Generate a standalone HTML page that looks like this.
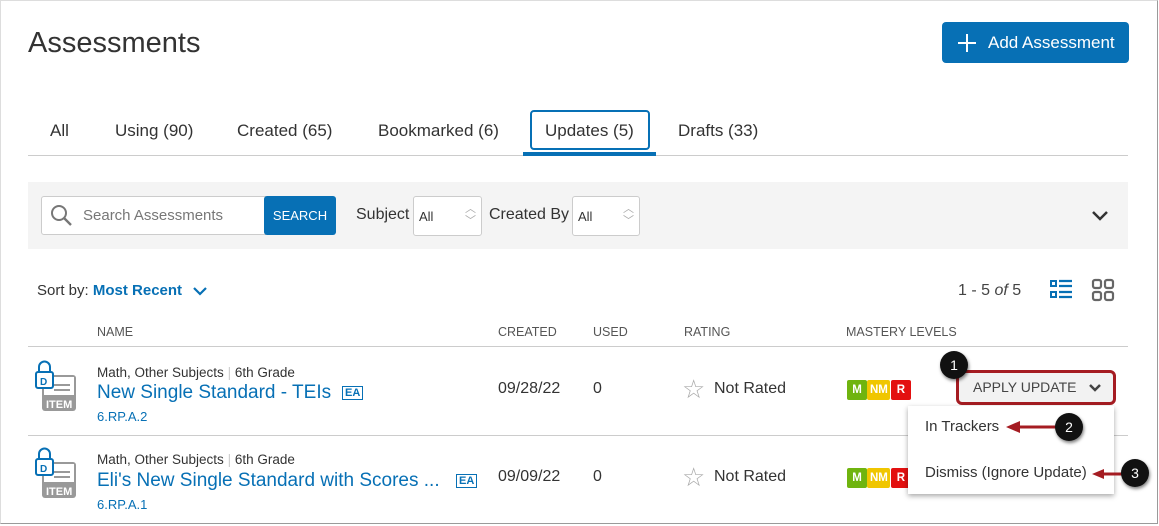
<!DOCTYPE html>
<html><head><meta charset="utf-8"><style>
*{box-sizing:border-box;margin:0;padding:0}
body{width:1159px;height:526px;background:#fff;font-family:"Liberation Sans",sans-serif;color:#333;position:relative;overflow:hidden}
.a{position:absolute;white-space:nowrap}
.frame{position:absolute;left:0;top:0;width:1158px;height:524px;border:1px solid #9a9a9a;border-top-color:#ddd;border-left-color:#ddd}
.tab{font-size:17px;color:#333;top:121px}
.hdr{font-size:12.5px;color:#555;top:325px}
.badge{display:inline-block;width:20px;height:20px;border-radius:2px;color:#fff;font-size:11.5px;text-align:center;line-height:20px;font-weight:bold}
.circ{width:28px;height:28px;border-radius:50%;background:#111;color:#fff;font-size:14px;text-align:center;line-height:28px;box-shadow:1px 2px 3px rgba(0,0,0,.5)}
.sel{border:1px solid #ccc;border-radius:3px;background:#fff;height:40px;top:196px;font-size:13px;padding:12px 5px}
</style></head><body>
<div class="frame"></div>
<div class="a" style="left:28px;top:27px;font-size:29px;color:#333">Assessments</div>
<div class="a" style="left:942px;top:22px;width:187px;height:41px;background:#0770b5;border-radius:4px;color:#fff;font-size:17px;line-height:41px;padding-left:46px">Add Assessment</div>
<div class="a" style="left:958px;top:42px;width:18px;height:2px;background:#fff"></div>
<div class="a" style="left:966px;top:34px;width:2px;height:18px;background:#fff"></div>

<div class="a tab" style="left:50px">All</div>
<div class="a tab" style="left:115px">Using (90)</div>
<div class="a tab" style="left:237px">Created (65)</div>
<div class="a tab" style="left:378px">Bookmarked (6)</div>
<div class="a" style="left:530px;top:110px;width:120px;height:40px;border:2px solid #0770b5;border-radius:4px"></div>
<div class="a tab" style="left:545px">Updates (5)</div>
<div class="a tab" style="left:678px">Drafts (33)</div>
<div class="a" style="left:28px;top:155px;width:1100px;height:1px;background:#ccc"></div>
<div class="a" style="left:523px;top:152px;width:133px;height:4px;background:#0770b5"></div>

<div class="a" style="left:28px;top:182px;width:1100px;height:67px;background:#f4f4f4"></div>
<div class="a" style="left:41px;top:196px;width:225px;height:39px;background:#fff;border:1px solid #ccc;border-radius:3px 0 0 3px"></div>
<svg class="a" style="left:50px;top:204px" width="24" height="24" viewBox="0 0 24 24"><circle cx="9" cy="9" r="7" fill="none" stroke="#777" stroke-width="2"/><path d="M14 14l7 7" stroke="#777" stroke-width="2.4"/></svg>
<div class="a" style="left:83px;top:207px;font-size:15px;color:#777">Search Assessments</div>
<div class="a" style="left:264px;top:196px;width:72px;height:39px;background:#0770b5;border-radius:3px;color:#fff;font-size:13px;line-height:39px;text-align:center">SEARCH</div>
<div class="a" style="left:356px;top:206px;font-size:16px">Subject</div>
<div class="a sel" style="left:413px;width:69px">All<span style="position:absolute;right:5px;top:6px;color:#aaa;font-size:11px;line-height:12px">︿<br>﹀</span></div>
<div class="a" style="left:489px;top:206px;font-size:16px">Created By</div>
<div class="a sel" style="left:572px;width:68px">All<span style="position:absolute;right:5px;top:6px;color:#aaa;font-size:11px;line-height:12px">︿<br>﹀</span></div>
<svg class="a" style="left:1091px;top:210px" width="18" height="12"><path d="M2 2l7 7 7-7" fill="none" stroke="#333" stroke-width="2.5"/></svg>

<div class="a" style="left:37px;top:282px;font-size:15px">Sort by: <b style="color:#0770b5">Most Recent</b></div>
<svg class="a" style="left:192px;top:286px" width="16" height="11"><path d="M2 2l6 6 6-6" fill="none" stroke="#0770b5" stroke-width="2.2"/></svg>
<div class="a" style="left:958px;top:282px;font-size:16px;color:#444">1 - 5 <i>of</i> 5</div>
<svg class="a" style="left:1049px;top:278px" width="24" height="24"><g fill="none" stroke="#0770b5" stroke-width="2"><rect x="2" y="3" width="5" height="5"/><rect x="2" y="14" width="5" height="5"/></g><g stroke="#0770b5" stroke-width="2.2"><path d="M10 3h13M10 8h13M10 14h13M10 19h13"/></g></svg>
<svg class="a" style="left:1091px;top:278px" width="24" height="24"><g fill="none" stroke="#666" stroke-width="2.2"><rect x="2" y="2" width="8" height="8" rx="2"/><rect x="14" y="2" width="8" height="8" rx="2"/><rect x="2" y="14" width="8" height="8" rx="2"/><rect x="14" y="14" width="8" height="8" rx="2"/></g></svg>

<div class="a hdr" style="left:97px">NAME</div>
<div class="a hdr" style="left:498px">CREATED</div>
<div class="a hdr" style="left:593px">USED</div>
<div class="a hdr" style="left:684px">RATING</div>
<div class="a hdr" style="left:846px">MASTERY LEVELS</div>
<div class="a" style="left:28px;top:346px;width:1100px;height:1px;background:#ccc"></div>
<div class="a" style="left:28px;top:435px;width:1100px;height:1px;background:#ccc"></div>

<div class="a" style="left:0;top:360px">
<svg class="a" style="left:34px;top:0" width="46" height="52"><rect x="8" y="15" width="34" height="36" rx="3" fill="#999"/><rect x="10" y="17" width="30" height="18" fill="#fff"/><path d="M20 25h16M20 30h16" stroke="#999" stroke-width="2"/><text x="12" y="48" font-size="11" font-weight="bold" fill="#fff" font-family="Liberation Sans">ITEM</text><rect x="2" y="12" width="17" height="16" rx="2" fill="#fff" stroke="#0770b5" stroke-width="2"/><path d="M5 12V7a5.5 5.5 0 0 1 11 0v5" fill="none" stroke="#0770b5" stroke-width="2"/><text x="6" y="25" font-size="10" font-weight="bold" fill="#0770b5" font-family="Liberation Sans">D</text></svg>
</div>
<div class="a" style="left:0;top:447px">
<svg class="a" style="left:34px;top:0" width="46" height="52"><rect x="8" y="15" width="34" height="36" rx="3" fill="#999"/><rect x="10" y="17" width="30" height="18" fill="#fff"/><path d="M20 25h16M20 30h16" stroke="#999" stroke-width="2"/><text x="12" y="48" font-size="11" font-weight="bold" fill="#fff" font-family="Liberation Sans">ITEM</text><rect x="2" y="12" width="17" height="16" rx="2" fill="#fff" stroke="#0770b5" stroke-width="2"/><path d="M5 12V7a5.5 5.5 0 0 1 11 0v5" fill="none" stroke="#0770b5" stroke-width="2"/><text x="6" y="25" font-size="10" font-weight="bold" fill="#0770b5" font-family="Liberation Sans">D</text></svg>
</div>

<div class="a" style="left:97px;top:365px;font-size:13.5px">Math, Other Subjects <span style="color:#ccc">|</span> 6th Grade</div>
<div class="a" style="left:97px;top:382px;font-size:19px;color:#0770b5">New Single Standard - TEIs</div>
<div class="a" style="left:342px;top:386px;font-size:11px;border:1.5px solid #0770b5;padding:0 2px;font-weight:bold;color:#0770b5">EA</div>
<div class="a" style="left:97px;top:409px;font-size:13px;color:#0770b5">6.RP.A.2</div>
<div class="a" style="left:97px;top:452px;font-size:13.5px">Math, Other Subjects <span style="color:#ccc">|</span> 6th Grade</div>
<div class="a" style="left:97px;top:470px;font-size:19px;color:#0770b5">Eli's New Single Standard with Scores ...</div>
<div class="a" style="left:456px;top:474px;font-size:11px;border:1.5px solid #0770b5;padding:0 2px;font-weight:bold;color:#0770b5">EA</div>
<div class="a" style="left:97px;top:497px;font-size:13px;color:#0770b5">6.RP.A.1</div>

<div class="a" style="left:498px;top:380px;font-size:16px">09/28/22</div>
<div class="a" style="left:593px;top:380px;font-size:16px">0</div>
<div class="a" style="left:498px;top:468px;font-size:16px">09/09/22</div>
<div class="a" style="left:593px;top:468px;font-size:16px">0</div>
<div class="a" style="left:682px;top:374px;font-size:26px;color:#aaa">☆</div>
<div class="a" style="left:714px;top:380px;font-size:16px">Not Rated</div>
<div class="a" style="left:682px;top:462px;font-size:26px;color:#aaa">☆</div>
<div class="a" style="left:714px;top:468px;font-size:16px">Not Rated</div>

<div class="a" style="left:847px;top:380px"><span class="badge" style="background:#6fb40f">M</span> <span class="badge" style="background:#f0c600;width:23px;margin-left:-4px">NM</span> <span class="badge" style="background:#e31010;margin-left:-4px">R</span></div>
<div class="a" style="left:847px;top:468px"><span class="badge" style="background:#6fb40f">M</span> <span class="badge" style="background:#f0c600;width:23px;margin-left:-4px">NM</span> <span class="badge" style="background:#e31010;margin-left:-4px">R</span></div>

<div class="a" style="left:956px;top:370px;width:160px;height:35px;border:3px solid #a51c22;border-radius:6px;background:#f2f2f2;font-size:14px;color:#444;line-height:29px;padding-left:14px">APPLY UPDATE</div>
<svg class="a" style="left:1088px;top:383px" width="14" height="10"><path d="M2 2l5 5 5-5" fill="none" stroke="#444" stroke-width="2.5"/></svg>
<div class="a circ" style="left:940px;top:351px">1</div>

<div class="a" style="left:908px;top:406px;width:206px;height:88px;background:#fff;box-shadow:0 2px 5px rgba(0,0,0,.35)"></div>
<div class="a" style="left:925px;top:418px;font-size:15px;color:#333">In Trackers</div>
<div class="a" style="left:925px;top:464px;font-size:15px;color:#333">Dismiss (Ignore Update)</div>
<svg class="a" style="left:1004px;top:418px" width="60" height="20"><path d="M6 9h50" stroke="#a51c22" stroke-width="3"/><path d="M2 9l14-6v12z" fill="#a51c22"/></svg>
<svg class="a" style="left:1090px;top:466px" width="40" height="16"><path d="M6 8h30" stroke="#a51c22" stroke-width="3"/><path d="M2 8l12-5v10z" fill="#a51c22"/></svg>
<div class="a circ" style="left:1055px;top:413px">2</div>
<div class="a circ" style="left:1121px;top:459px">3</div>
</body></html>
